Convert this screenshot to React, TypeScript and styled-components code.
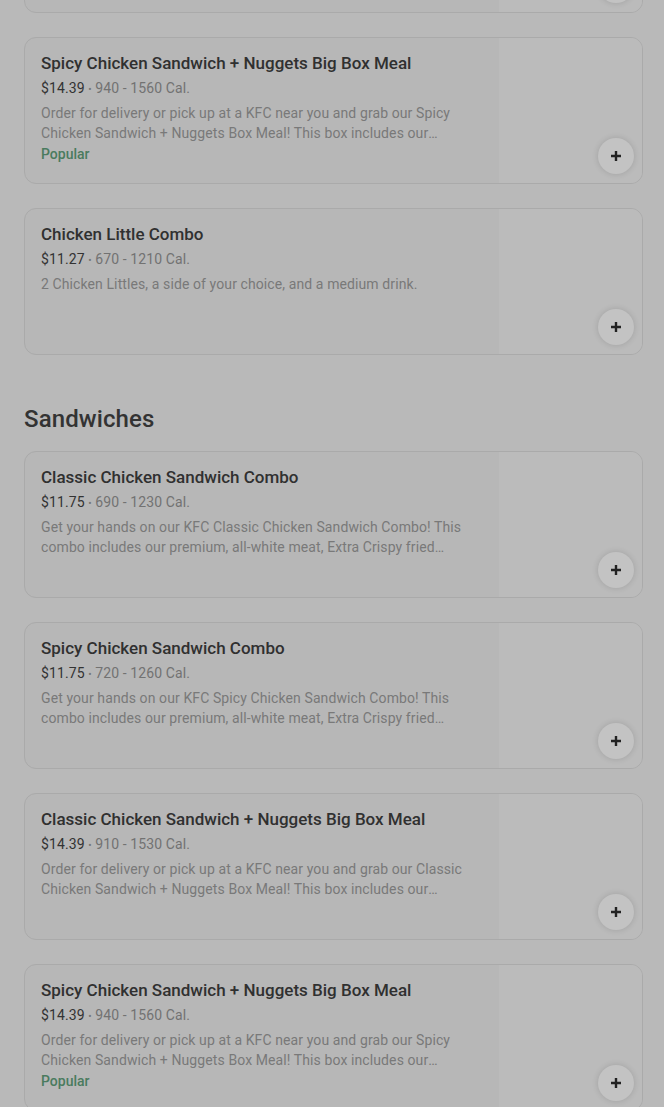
import styled, { createGlobalStyle } from 'styled-components'

type Item = {
  id: number
  nome: string
  preco: string
  calorias: string
  descricao: string
  popular?: boolean
}

const combos: Item[] = [
  {
    id: 1,
    nome: 'Classic Chicken Sandwich + Nuggets Big Box Meal',
    preco: '$14.39',
    calorias: '910 - 1530 Cal.',
    descricao:
      'Order for delivery or pick up at a KFC near you and grab our Classic Chicken Sandwich + Nuggets Box Meal! This box includes our premium sandwich.'
  },
  {
    id: 2,
    nome: 'Spicy Chicken Sandwich + Nuggets Big Box Meal',
    preco: '$14.39',
    calorias: '940 - 1560 Cal.',
    descricao:
      'Order for delivery or pick up at a KFC near you and grab our Spicy Chicken Sandwich + Nuggets Box Meal! This box includes our premium sandwich.',
    popular: true
  },
  {
    id: 3,
    nome: 'Chicken Little Combo',
    preco: '$11.27',
    calorias: '670 - 1210 Cal.',
    descricao: '2 Chicken Littles, a side of your choice, and a medium drink.'
  }
]

const sandwiches: Item[] = [
  {
    id: 4,
    nome: 'Classic Chicken Sandwich Combo',
    preco: '$11.75',
    calorias: '690 - 1230 Cal.',
    descricao:
      'Get your hands on our KFC Classic Chicken Sandwich Combo! This combo includes our premium, all-white meat, Extra Crispy fried chicken breast.'
  },
  {
    id: 5,
    nome: 'Spicy Chicken Sandwich Combo',
    preco: '$11.75',
    calorias: '720 - 1260 Cal.',
    descricao:
      'Get your hands on our KFC Spicy Chicken Sandwich Combo! This combo includes our premium, all-white meat, Extra Crispy fried chicken breast.'
  },
  {
    id: 6,
    nome: 'Classic Chicken Sandwich + Nuggets Big Box Meal',
    preco: '$14.39',
    calorias: '910 - 1530 Cal.',
    descricao:
      'Order for delivery or pick up at a KFC near you and grab our Classic Chicken Sandwich + Nuggets Box Meal! This box includes our premium sandwich.'
  },
  {
    id: 7,
    nome: 'Spicy Chicken Sandwich + Nuggets Big Box Meal',
    preco: '$14.39',
    calorias: '940 - 1560 Cal.',
    descricao:
      'Order for delivery or pick up at a KFC near you and grab our Spicy Chicken Sandwich + Nuggets Box Meal! This box includes our premium sandwich.',
    popular: true
  }
]

const EstiloGlobal = createGlobalStyle`
  * {
    box-sizing: border-box;
  }

  body {
    margin: 0;
    background: #b9b9b9;
    font-family: Roboto, 'Liberation Sans', sans-serif;
    overflow: hidden;
  }
`

const Pagina = styled.main`
  padding: 0 21px 0 24px;
  margin-top: -134px;
`

const Secao = styled.section`
  margin-bottom: 48px;
`

const TituloSecao = styled.h2`
  margin: 0 0 16px;
  height: 32px;
  font-size: 24px;
  line-height: 32px;
  font-weight: 500;
  color: #333;
  letter-spacing: 0.1px;
`

const Lista = styled.ul`
  list-style: none;
  margin: 0;
  padding: 0;
  display: flex;
  flex-direction: column;
  gap: 24px;
`

const Card = styled.li`
  position: relative;
  display: flex;
  height: 147px;
  background: #b7b7b7;
  border: 1px solid #aaaaaa;
  border-radius: 12px;
  overflow: hidden;
`

const Conteudo = styled.div`
  flex: 1;
  min-width: 0;
  padding: 15px 16px 16px;
`

const Nome = styled.h3`
  margin: 0;
  font-size: 17px;
  line-height: 20px;
  font-weight: 500;
  color: #303030;
`

const Linha = styled.p`
  margin: 5px 0 0;
  font-size: 14px;
  line-height: 20px;
  color: #727272;
  letter-spacing: 0.1px;
`

const Preco = styled.span`
  color: #333;
`

const Ponto = styled.span`
  font-size: 10px;
  color: #777;
`

const Descricao = styled.p`
  margin: 3px 0 0;
  font-size: 14px;
  line-height: 20px;
  color: #797979;
  letter-spacing: 0.1px;
  display: -webkit-box;
  -webkit-line-clamp: 2;
  -webkit-box-orient: vertical;
  overflow: hidden;
`

const Popular = styled.span`
  display: block;
  margin-top: 1px;
  font-size: 14px;
  line-height: 20px;
  font-weight: 500;
  color: #4a7b5e;
`

const Imagem = styled.div`
  width: 143px;
  flex-shrink: 0;
  background: #bbbbbb;
`

const BotaoAdicionar = styled.button`
  position: absolute;
  right: 8px;
  bottom: 9px;
  width: 36px;
  height: 36px;
  border: none;
  border-radius: 50%;
  padding: 0;
  background: #c3c3c3;
  box-shadow: 0 0 6px rgba(0, 0, 0, 0.14);
  display: flex;
  align-items: center;
  justify-content: center;
  cursor: pointer;
`

const IconeMais = () => (
  <svg width="12" height="12" viewBox="0 0 12 12">
    <path d="M6 1v10M1 6h10" stroke="#222" strokeWidth="2.4" />
  </svg>
)

const CardItem = ({ item }: { item: Item }) => (
  <Card>
    <Conteudo>
      <Nome>{item.nome}</Nome>
      <Linha>
        <Preco>{item.preco}</Preco> <Ponto>•</Ponto> {item.calorias}
      </Linha>
      <Descricao>{item.descricao}</Descricao>
      {item.popular && <Popular>Popular</Popular>}
    </Conteudo>
    <Imagem />
    <BotaoAdicionar aria-label="Adicionar">
      <IconeMais />
    </BotaoAdicionar>
  </Card>
)

const App = () => (
  <>
    <EstiloGlobal />
    <Pagina>
      <Secao>
        <Lista>
          {combos.map((item) => (
            <CardItem key={item.id} item={item} />
          ))}
        </Lista>
      </Secao>
      <Secao>
        <TituloSecao>Sandwiches</TituloSecao>
        <Lista>
          {sandwiches.map((item) => (
            <CardItem key={item.id} item={item} />
          ))}
        </Lista>
      </Secao>
    </Pagina>
  </>
)

export default App
